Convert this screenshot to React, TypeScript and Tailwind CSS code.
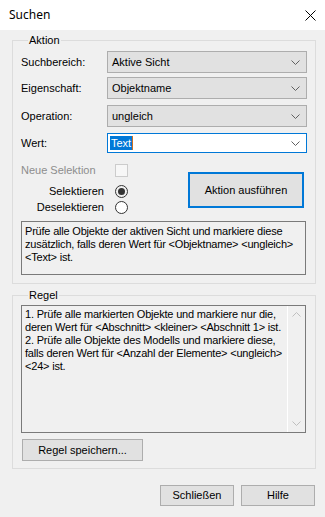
import React from "react"

const font = { fontFamily: '"Liberation Sans", Arial, sans-serif' }

function Chevron({ color = "#606060" }: { color?: string }) {
  return (
    <svg width="9" height="5" viewBox="0 0 9 5" className="block">
      <path d="M0.5 0.5 L4.5 4.5 L8.5 0.5" fill="none" stroke={color} strokeWidth="1" />
    </svg>
  )
}

function Row({ label, value, className }: { label: string; value: string; className: string }) {
  return (
    <div className={`flex items-center ${className}`}>
      <div className="w-[86px] text-[11px] leading-[13px] text-black">{label}</div>
      <div className="w-[200px] h-[22px] border border-[#adadad] bg-[#e1e1e1] flex items-center justify-between pl-[4px] pr-[6px]">
        <span className="text-[11px] leading-[13px] text-black">{value}</span>
        <Chevron />
      </div>
    </div>
  )
}

function Button({ label, className }: { label: string; className: string }) {
  return (
    <div className={`border border-[#adadad] bg-[#e1e1e1] flex items-center justify-center text-[11px] leading-[13px] text-black ${className}`}>
      {label}
    </div>
  )
}

export default function App() {
  return (
    <div className="w-[325px] h-[517px] flex flex-col bg-[#f0f0f0] overflow-hidden" style={font}>
      {/* Title bar */}
      <div className="h-[30px] bg-white flex items-center justify-between pl-[9px] pr-[8px]">
        <span className="text-[12px] text-black" style={{ fontFamily: '"Noto Sans", "Open Sans", sans-serif' }}>
          Suchen
        </span>
        <svg width="11" height="11" viewBox="0 0 11 11" className="mr-[1px]">
          <path d="M0.5 0.5 L10.5 10.5 M10.5 0.5 L0.5 10.5" stroke="#000" strokeWidth="1" />
        </svg>
      </div>

      <div className="flex flex-col pl-[12px] pr-[9px]">
        {/* Aktion */}
        <fieldset className="mt-[4px] border border-[#dcdcdc] pl-[8px] pr-[8px] pb-[8px]">
          <legend className="ml-[7px] px-[1px] text-[11px] leading-[13px] text-black">Aktion</legend>
          <Row label="Suchbereich:" value="Aktive Sicht" className="mt-[4px]" />
          <Row label="Eigenschaft:" value="Objektname" className="mt-[4px]" />
          <Row label="Operation:" value="ungleich" className="mt-[6px]" />
          <div className="flex items-center mt-[6px]">
            <div className="w-[86px] text-[11px] leading-[13px] text-black">Wert:</div>
            <div className="w-[200px] h-[20px] border border-[#0078d7] bg-white flex items-center justify-between pl-[2px] pr-[6px]">
              <span className="flex items-center">
                <span className="bg-[#0078d7] text-white text-[11px] leading-[14px] px-[1px]">Text</span>
                <span className="w-[1px] h-[14px] bg-[#d07020]" />
              </span>
              <Chevron />
            </div>
          </div>

          <div className="flex mt-[11px]">
            <div className="w-[107px] flex flex-col text-[11px] leading-[13px]">
              <div className="flex items-center justify-between h-[13px]">
                <span className="text-[#8d8d8d]">Neue Selektion</span>
                <span className="w-[13px] h-[13px] border border-[#cccccc] bg-[#f7f7f7]" />
              </div>
              <div className="flex items-center justify-end h-[13px] mt-[8px]">
                <span className="text-black">Selektieren</span>
                <span className="ml-[11px] w-[13px] h-[13px] rounded-full border border-[#333333] flex items-center justify-center">
                  <span className="w-[7px] h-[7px] rounded-full bg-[#333333]" />
                </span>
              </div>
              <div className="flex items-center justify-end h-[13px] mt-[3px]">
                <span className="text-black">Deselektieren</span>
                <span className="ml-[11px] w-[13px] h-[13px] rounded-full border border-[#333333] bg-white" />
              </div>
            </div>
            <div className="ml-[60px] mt-[8px] w-[116px] h-[36px] border-2 border-[#0078d7] bg-[#e1e1e1] flex items-center justify-center text-[11px] leading-[13px] text-black">
              Aktion ausführen
            </div>
          </div>

          <div className="mt-[7px] w-[285px] h-[54px] border border-[#7a7a7a] pl-[3px] pr-[1px] pt-[3px] text-[11px] leading-[13px] tracking-[-0.2px] text-black">
            Prüfe alle Objekte der aktiven Sicht und markiere diese zusätzlich, falls deren Wert für &lt;Objektname&gt; &lt;ungleich&gt; &lt;Text&gt; ist.
          </div>
        </fieldset>

        {/* Regel */}
        <fieldset className="mt-[5px] border border-[#dcdcdc] pl-[8px] pr-[8px] pb-[7px]">
          <legend className="ml-[7px] px-[1px] text-[11px] leading-[13px] text-black">Regel</legend>
          <div className="mt-[3px] w-[285px] h-[128px] border border-[#7a7a7a] flex">
            <div className="flex-1 pl-[3px] pt-[2px] text-[11px] leading-[13px] tracking-[-0.2px] text-black">
              1. Prüfe alle markierten Objekte und markiere nur die, deren Wert für &lt;Abschnitt&gt; &lt;kleiner&gt; &lt;Abschnitt 1&gt; ist.
              <br />
              2. Prüfe alle Objekte des Modells und markiere diese, falls deren Wert für &lt;Anzahl der Elemente&gt; &lt;ungleich&gt; &lt;24&gt; ist.
            </div>
            <div className="w-[18px] border-l border-white flex flex-col items-center justify-between py-[6px]">
              <svg width="9" height="5" viewBox="0 0 9 5" className="block">
                <path d="M0.5 4.5 L4.5 0.5 L8.5 4.5" fill="none" stroke="#bfbfbf" strokeWidth="1" />
              </svg>
              <Chevron color="#bfbfbf" />
            </div>
          </div>
          <Button label="Regel speichern..." className="mt-[6px] ml-[1px] w-[121px] h-[22px]" />
        </fieldset>

        {/* Bottom buttons */}
        <div className="flex justify-end mt-[16px] pr-[1px] gap-[7px]">
          <Button label="Schließen" className="w-[74px] h-[21px]" />
          <Button label="Hilfe" className="w-[74px] h-[21px]" />
        </div>
      </div>
    </div>
  )
}
